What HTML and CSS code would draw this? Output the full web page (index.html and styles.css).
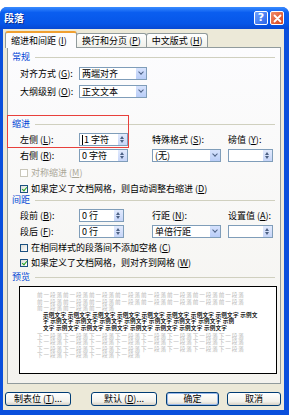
FILE: index.html
```html
<!DOCTYPE html>
<html lang="zh-CN">
<head>
    <meta charset="utf-8" />
    <title>段落</title>
    <link rel="stylesheet" href="styles.css">
</head>
<body>
    <div class="window">
        <div class="titlebar">
            <span class="title">段落</span>
            <div class="caption-btns">
                <span class="cbtn help">?</span>
                <span class="cbtn close">
                    <svg width="9" height="9" viewBox="0 0 9 9"><path d="M1.5 1.5l6 6M7.5 1.5l-6 6" stroke="#fff" stroke-width="1.8" stroke-linecap="round"/></svg>
                </span>
            </div>
        </div>
        <div class="client">
            <div class="tabs">
                <div class="tab active">缩进和间距 (<u>I</u>)</div>
                <div class="tab">换行和分页 (<u>P</u>)</div>
                <div class="tab">中文版式 (<u>H</u>)</div>
            </div>
            <div class="panel">
                <div class="group-title"><span>常规</span></div>
                <div class="row first">
                    <span class="lbl">对齐方式 (<u>G</u>):</span>
                    <div class="select w68"><span>两端对齐</span><i class="drop"></i></div>
                </div>
                <div class="row second">
                    <span class="lbl">大纲级别 (<u>O</u>):</span>
                    <div class="select w68"><span>正文文本</span><i class="drop"></i></div>
                </div>

                <div class="group-title indent-title"><span>缩进</span></div>
                <div class="grid">
                    <span class="lbl">左侧 (<u>L</u>):</span>
                    <div class="spin w49"><span><i class="caret"></i>1 字符</span><i class="arrows"></i></div>
                    <span class="lbl">特殊格式 (<u>S</u>):</span>
                    <span class="lbl">磅值 (<u>Y</u>):</span>
                    <span class="lbl">右侧 (<u>R</u>):</span>
                    <div class="spin w49"><span>0 字符</span><i class="arrows"></i></div>
                    <div class="select w69"><span>(无)</span><i class="drop"></i></div>
                    <div class="spin w45"><span></span><i class="arrows"></i></div>
                </div>
                <div class="check disabled top5"><i class="box"></i><span>对称缩进 (<u>M</u>)</span></div>
                <div class="check top5"><i class="box on"></i><span>如果定义了文档网格，则自动调整右缩进 (<u>D</u>)</span></div>

                <div class="group-title"><span>间距</span></div>
                <div class="grid">
                    <span class="lbl">段前 (<u>B</u>):</span>
                    <div class="spin w45"><span>0 行</span><i class="arrows"></i></div>
                    <span class="lbl">行距 (<u>N</u>):</span>
                    <span class="lbl">设置值 (<u>A</u>):</span>
                    <span class="lbl">段后 (<u>F</u>):</span>
                    <div class="spin w45"><span>0 行</span><i class="arrows"></i></div>
                    <div class="select w69"><span>单倍行距</span><i class="drop"></i></div>
                    <div class="spin w45"><span></span><i class="arrows"></i></div>
                </div>
                <div class="check top4"><i class="box"></i><span>在相同样式的段落间不添加空格 (<u>C</u>)</span></div>
                <div class="check top4"><i class="box on"></i><span>如果定义了文档网格，则对齐到网格 (<u>W</u>)</span></div>

                <div class="group-title preview-title"><span>预览</span></div>
                <div class="preview">
                    <div class="pl grey">前一段落前一段落前一段落前一段落前一段落前一段落前一段落前一段落</div>
                    <div class="pl grey">前一段落前一段落前一段落前一段落前一段落前一段落前一段落前一段落</div>
                    <div class="pl grey">前一段落前一段落前一段落</div>
                    <div class="pl sample">示例文字 示例文字 示例文字 示例文字 示例文字 示例文字 示例文字 示例文字 示例文</div>
                    <div class="pl sample">字 示例文字 示例文字 示例文字 示例文字 示例文字 示例文字 示例文字 示例</div>
                    <div class="pl sample">文字 示例文字 示例文字 示例文字 示例文字 示例文字 示例文字 示例文字</div>
                    <div class="pl grey">下一段落下一段落下一段落下一段落下一段落下一段落下一段落下一段落</div>
                    <div class="pl grey">下一段落下一段落下一段落下一段落下一段落下一段落下一段落下一段落</div>
                    <div class="pl grey">下一段落下一段落下一段落下一段落下一段落下一段落下一段落下一段落</div>
                    <div class="pl grey">下一段落下一段落下一段落下一段落</div>
                </div>
            </div>
            <div class="buttons">
                <button class="btn w66">制表位 (<u>T</u>)...</button>
                <button class="btn w66 gap20">默认 (<u>D</u>)...</button>
                <button class="btn w53 gap9 default">确定</button>
                <button class="btn w54 gap8">取消</button>
            </div>
        </div>
    </div>
    <div class="mark"></div>
</body>
</html>
```

FILE: styles.css
```css
body{
    margin:0;
    background:#fff;
    font-family:"Noto Sans CJK SC","Noto Sans",sans-serif;
    font-size:9px;
    color:#000;
}
u{
    text-decoration:underline;
    text-underline-offset:1px;
}
.window{
    width:289px;
    height:408px;
    margin-top:7px;
    background:#0a4fdc;
    border-radius:7px 7px 0 0;
    display:flex;
    flex-direction:column;
}
.titlebar{
    height:22px;
    display:flex;
    align-items:center;
    justify-content:space-between;
    padding:0 5px 0 4px;
    border-radius:7px 7px 0 0;
    background:linear-gradient(#3a8cff,#0a5ef0 25%,#0656e8 75%,#0748d2);
}
.title{
    color:#fff;
    font-weight:bold;
    font-size:10px;
    line-height:14px;
    text-shadow:1px 1px 0 #0a2a8a;
}
.caption-btns{
    display:flex;
    gap:2px;
}
.cbtn{
    width:14px;
    height:14px;
    box-sizing:border-box;
    border:1px solid #fff;
    border-radius:2px;
    display:flex;
    align-items:center;
    justify-content:center;
    color:#fff;
    font-family:"DejaVu Sans",sans-serif;
    font-weight:bold;
    font-size:11px;
    line-height:12px;
}
.help{
    background:linear-gradient(135deg,#6ea2ff,#2a64e8);
}
.close{
    background:linear-gradient(135deg,#f08a68,#d8441c);
}
.client{
    flex:1;
    margin:0 5px 5px 3px;
    background:#ece9d8;
}
.tabs{
    display:flex;
    align-items:flex-end;
    height:18px;
    padding-left:2px;
}
.tab{
    height:14px;
    box-sizing:border-box;
    padding:0 5px;
    border:1px solid #919b9c;
    border-bottom:none;
    border-radius:3px 3px 0 0;
    background:linear-gradient(#fff,#f0f0ea);
    line-height:13px;
    white-space:nowrap;
}
.tab + .tab{
    margin-left:-1px;
}
.tab.active{
    height:17px;
    width:72px;
    margin-bottom:-1px;
    border-top:2px solid #f0a030;
    background:#fcfcfe;
    position:relative;
    z-index:1;
    line-height:15px;
}
.panel{
    margin-left:4px;
    width:274px;
    height:337px;
    box-sizing:border-box;
    border:1px solid #919b9c;
    padding:3px 5px 0 4px;
    background:linear-gradient(#fcfcfe,#f4f3ee);
}
.group-title{
    display:flex;
    align-items:center;
    gap:5px;
    height:12px;
    line-height:12px;
    color:#0046d5;
}
.group-title::after{
    content:"";
    flex:1;
    height:1px;
    background:#d0d0bf;
}
.indent-title{
    margin-top:20px;
}
.preview-title{
    margin-top:3px;
}
.row{
    display:flex;
    align-items:center;
    height:13px;
    margin-left:8px;
}
.row.first{
    margin-top:4px;
}
.row.second{
    margin-top:5px;
}
.lbl{
    width:59px;
    flex:none;
    white-space:nowrap;
    line-height:13px;
}
.grid{
    display:grid;
    grid-template-columns:59px 73px 76px 45px;
    grid-auto-rows:13px;
    row-gap:3px;
    margin:3px 0 0 8px;
    align-items:center;
}
.select,.spin{
    height:13px;
    box-sizing:border-box;
    border:1px solid #7f9db9;
    background:#fff;
    display:flex;
    align-items:center;
    justify-content:space-between;
    padding-left:2px;
    white-space:nowrap;
}
.select span,.spin span{
    line-height:11px;
    display:flex;
    align-items:center;
}
.w45{ width:45px; }
.w49{ width:49px; }
.w68{ width:68px; }
.w69{ width:69px; }
.drop{
    width:10px;
    height:11px;
    flex:none;
    border-left:1px solid #fff;
    background:linear-gradient(#d6e2fd,#b9cdf7) no-repeat;
    position:relative;
}
.drop::after{
    content:"";
    position:absolute;
    left:3px;
    top:2px;
    width:3px;
    height:3px;
    border-right:1.5px solid #4d6185;
    border-bottom:1.5px solid #4d6185;
    transform:rotate(45deg);
}
.arrows{
    width:9px;
    height:11px;
    flex:none;
    background:linear-gradient(#e2eafd,#c6d5f8);
    position:relative;
}
.arrows::before,.arrows::after{
    content:"";
    position:absolute;
    left:2px;
    border-left:2.5px solid transparent;
    border-right:2.5px solid transparent;
}
.arrows::before{
    top:2px;
    border-bottom:3px solid #4d6185;
}
.arrows::after{
    top:6px;
    border-top:3px solid #4d6185;
}
.caret{
    display:inline-block;
    width:1px;
    height:10px;
    background:#000;
    margin-right:1px;
}
.check{
    display:flex;
    align-items:center;
    gap:3px;
    height:11px;
    line-height:11px;
    margin-left:8px;
    white-space:nowrap;
}
.check.top5{ margin-top:5px; }
.check.top4{ margin-top:4px; }
.check.disabled{
    color:#aca899;
}
.box{
    width:8px;
    height:8px;
    flex:none;
    box-sizing:border-box;
    border:1px solid #1c5180;
    background:linear-gradient(135deg,#dcdcd7,#fff);
    position:relative;
}
.disabled .box{
    border-color:#c9c7ba;
    background:#fff;
}
.box.on::after{
    content:"";
    position:absolute;
    left:2px;
    top:0;
    width:2px;
    height:4px;
    border-right:1.5px solid #21a121;
    border-bottom:1.5px solid #21a121;
    transform:rotate(40deg);
}
.preview{
    margin:3px 0 0 7px;
    width:258px;
    height:88px;
    box-sizing:border-box;
    border:1px solid #000;
    background:#fff;
    padding:5px 0 0 17px;
}
.pl{
    height:6.6px;
    line-height:6.6px;
    font-size:5.6px;
    letter-spacing:0.9px;
    white-space:nowrap;
}
.grey{
    color:#b8b8b8;
}
.sample{
    color:#222;
    font-weight:bold;
    letter-spacing:0.2px;
    margin-left:6px;
}
.sample + .grey{
    margin-top:1px;
}
.buttons{
    display:flex;
    margin:8px 0 0 2px;
}
.btn{
    height:14px;
    box-sizing:border-box;
    border:1px solid #003c74;
    border-radius:3px;
    background:linear-gradient(#fff,#f2f1eb 70%,#d6d0c5);
    font-family:inherit;
    font-size:9px;
    padding:0;
    line-height:12px;
    color:#000;
}
.btn.default{
    box-shadow:inset 0 0 0 1px #98b8ea;
}
.w53{ width:53px; }
.w54{ width:54px; }
.w66{ width:66px; }
.gap20{ margin-left:20px; }
.gap9{ margin-left:9px; }
.gap8{ margin-left:8px; }
.mark{
    position:absolute;
    left:7px;
    top:115px;
    width:122px;
    height:33px;
    box-sizing:border-box;
    border:1px solid #e8403c;
}
```
